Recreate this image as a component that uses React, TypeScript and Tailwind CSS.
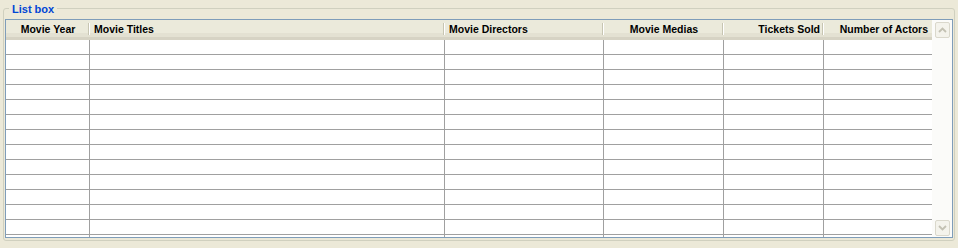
import React from "react";

type Column = {
  title: string;
  width: string;
  align: "left" | "center" | "right";
};

const columns: Column[] = [
  { title: "Movie Year", width: "w-[84px]", align: "center" },
  { title: "Movie Titles", width: "w-[355px]", align: "left" },
  { title: "Movie Directors", width: "w-[159px]", align: "left" },
  { title: "Movie Medias", width: "w-[120px]", align: "center" },
  { title: "Tickets Sold", width: "w-[100px]", align: "right" },
  { title: "Number of Actors", width: "w-[108px]", align: "right" },
];

const alignClass = {
  left: "justify-start pl-[4px]",
  center: "justify-center",
  right: "justify-end pr-[4px]",
};

// empty grid body: 13 full rows + a clipped one at the bottom
const rows = Array.from({ length: 14 }, (_, i) => i);

function ScrollButton({ up }: { up: boolean }) {
  return (
    <div className="w-[15px] h-[16px] mx-auto rounded-[2px] border border-[#dad8cc] bg-[#f4f3ec] flex items-center justify-center">
      <svg width="9" height="6" viewBox="0 0 9 6">
        <path
          d={up ? "M1 5 L4.5 1.5 L8 5" : "M1 1 L4.5 4.5 L8 1"}
          fill="none"
          stroke="#c3c1b3"
          strokeWidth="1.8"
        />
      </svg>
    </div>
  );
}

export default function App() {
  return (
    <div
      className="w-[958px] h-[248px] bg-[#ece9d8] pt-[8px] pl-[3px] pr-[3px]"
      style={{ fontFamily: '"Liberation Sans", Arial, sans-serif' }}
    >
      {/* Group box */}
      <div className="relative w-[952px] h-[233px] border border-[#d0d0bf] rounded-[3px] pt-[10px] pl-[1px] pr-[1px]">
        <span className="absolute -top-[6px] left-[5px] bg-[#ece9d8] px-[3px] text-[11px] leading-[13px] font-bold text-[#0046d5]">
          List box
        </span>

        {/* List box */}
        <div className="w-[948px] h-[219px] border border-[#7f9db9] bg-white flex overflow-hidden">
          <div className="flex-1 flex flex-col overflow-hidden">
            {/* Header */}
            <div className="h-[20px] shrink-0 flex pt-[2px] bg-[#ebeadb] border-b-[3px] border-[#d6d3c4] shadow-[inset_0_-4px_0_#e3e1d2]">
              {columns.map((c, i) => (
                <div
                  key={c.title}
                  className={`${c.width} shrink-0 flex items-center text-[10.5px] font-bold text-black relative ${alignClass[c.align]}`}
                >
                  <span className="whitespace-nowrap">{c.title}</span>
                  {i < columns.length - 1 && (
                    <div className="absolute right-0 top-[1px] h-[12px] w-[2px] border-l border-[#c7c5b2] bg-white" />
                  )}
                </div>
              ))}
            </div>

            {/* Rows */}
            {rows.map((r) => (
              <div key={r} className="h-[15px] shrink-0 flex border-b border-[#a0a0a0]">
                {columns.map((c, i) => (
                  <div
                    key={c.title}
                    className={`${c.width} shrink-0 ${i < columns.length - 1 ? "border-r border-[#a0a0a0]" : ""}`}
                  />
                ))}
              </div>
            ))}
          </div>

          {/* Vertical scrollbar (disabled) */}
          <div className="w-[20px] shrink-0 bg-[#fbfbf9] flex flex-col justify-between pt-[2px] pb-[1px]">
            <ScrollButton up />
            <ScrollButton up={false} />
          </div>
        </div>
      </div>
    </div>
  );
}
